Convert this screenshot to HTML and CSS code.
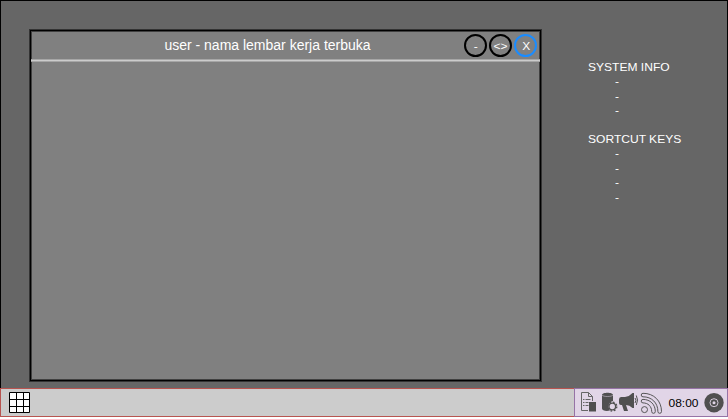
FILE: index.html
```html
<!DOCTYPE html>
<html lang="id">
<head>
<meta charset="utf-8">
<title>Desktop</title>
<link rel="stylesheet" href="styles.css">
</head>
<body>
<div class="screen">
  <main class="desktop">
    <section class="window">
      <div class="window-inner">
        <header class="titlebar">
          <h1 class="title">user - nama lembar kerja terbuka</h1>
          <div class="controls">
            <button class="control"><span class="wide">-</span></button>
            <button class="control"><span class="wide">&lt;&gt;</span></button>
            <button class="control close"><span class="wide cross">X</span></button>
          </div>
        </header>
      </div>
    </section>
    <aside class="info">
      <h2>SYSTEM INFO</h2>
      <ul><li>-</li><li>-</li><li>-</li></ul>
      <h2>SORTCUT KEYS</h2>
      <ul><li>-</li><li>-</li><li>-</li><li>-</li></ul>
    </aside>
  </main>
  <footer class="taskbar">
    <div class="tasks">
      <svg class="grid-icon" width="22" height="22" viewBox="0 0 22 22"><path fill="#fff" stroke="#000" d="M.5.5h20v20H.5zM7.5.5v20M14.500.5v20M.5 7.500h20M.5 14.500h20"/></svg>
    </div>
    <div class="tray">
      <svg width="152" height="27" viewBox="575 389 152 27">
        <g fill="none" stroke="#666">
          <path d="M588 410.500h-6.500v-18h7l4 4v4.500M588.500 392.500v4h4"/>
          <path d="M583 399.500h1.500m1 0h5M583 402.500h1.500m1 0h3M583 405.500h1.500m1 0h3"/>
        </g>
        <path fill="#505050" d="M589 402h7v9.500h-7z"/>
        <path fill="#505050" d="M602 395c0-3 11-3 11 0v6c-4 1-6 5-3 9.500-4 1-8 0-8-2z"/>
        <path fill="none" stroke="#e1d5e7" stroke-width=".5" d="M602 395c1 2 10 2 11 0"/>
        <circle cx="612.300" cy="406.500" r="3.300" fill="#e1d5e7" stroke="#505050" stroke-width="1.300"/>
        <circle cx="612.300" cy="406.500" r="4.500" fill="none" stroke="#505050" stroke-width="1.300" stroke-dasharray="1.770 1.770"/>
        <path fill="#505050" d="M619 399.500q0-2.500 2-2.500h4q5-1 7.500-4h1.500v15h-1.500q-3-3-6.500-3l2 6h-4l-2-6h-1q-2 0-2-2z"/>
        <path fill="none" stroke="#505050" d="M635 398q2 2 0 5M636.300 395.500q2.500 4.500 0 9.500"/>
        <g fill="none" stroke="#505050" stroke-width=".95">
          <path d="M643 393.300c11 0 18.500 7.700 18.500 18.200a1.800 1.800 0 0 1-3.600 0c0-8.700-6.200-14.700-14.900-14.700a1.750 1.750 0 0 1 0-3.500z"/>
          <path d="M643 399.400c7.200 0 12.300 5 12.300 12.100a1.800 1.800 0 0 1-3.600 0c0-5.100-3.600-8.600-8.700-8.600a1.750 1.750 0 0 1 0-3.500z"/>
          <circle cx="644.500" cy="409.600" r="3"/>
        </g>
        <text class="clock" x="668.500" y="407" textLength="30" lengthAdjust="spacingAndGlyphs">08:00</text>
        <circle cx="714" cy="402.700" r="9.700" fill="#505050"/>
        <circle cx="714" cy="402.700" r="4" fill="none" stroke="#e1d5e7" stroke-width=".9"/>
        <circle cx="714" cy="402.700" r="1.500" fill="#e1d5e7"/>
      </svg>
    </div>
  </footer>
</div>
</body>
</html>
```
FILE: styles.css
```css
* { box-sizing: border-box; }
body { margin: 0; background: #fff; font-family: "Liberation Sans", Arial, sans-serif; }
h1, h2, ul { margin: 0; padding: 0; font-weight: 400; }
.screen { width: 728px; height: 417px; display: flex; flex-direction: column; }
.desktop { height: 388px; display: flex; background: #666; border: 1px solid #000; border-bottom: 0; padding: 28px 0 0 28px; color: #fff; }
.window { width: 513px; height: 353px; border: 1px solid #333; background: #808080; }
.window-inner { height: 351px; border: 1px solid #000; box-shadow: inset 0 0 0 1px #404040; }
.titlebar { height: 31px; display: flex; position: relative; background: linear-gradient(#a6a6a6 0 1px, #ccc 1px 2px, #a6a6a6 2px 3px) 0 28px / 100% 3px no-repeat; }
.title { width: 473px; font-size: 14px; line-height: 28px; text-align: center; }
.controls { position: absolute; right: 3px; top: 3px; display: flex; gap: 2px; }
.control { width: 23px; height: 23px; padding: 0; border: 2px solid #000; border-radius: 50%; background: none; color: #fff; font: 11px/20px "Liberation Sans", Arial, sans-serif; }
.close { border-color: #1a8cff; }
.wide { display: inline-block; transform: scaleX(1.09); }
.cross { transform: translateX(.5px) scaleX(1.09); }
.info { margin-left: 46px; padding-top: 31px; font-size: 11px; line-height: 14.4px; }
.info h2 { font-size: 11px; line-height: 14.4px; width: 110px; transform: scaleX(1.095); transform-origin: left; }
.info ul { list-style: none; padding-left: 26.5px; margin-bottom: 14.4px; }
.info li { width: 20px; transform: scaleX(1.09); transform-origin: left; }
.taskbar { height: 29px; display: flex; }
.tasks { width: 574px; background: #ccc; border: 1px solid #b85450; border-right: 0; padding: 3px 8px; }
.grid-icon { display: block; }
.tray { width: 154px; background: #e1d5e7; border: 1px solid #9673a6; }
.tray svg { display: block; }
.clock { font-size: 11px; fill: #000; }
```
